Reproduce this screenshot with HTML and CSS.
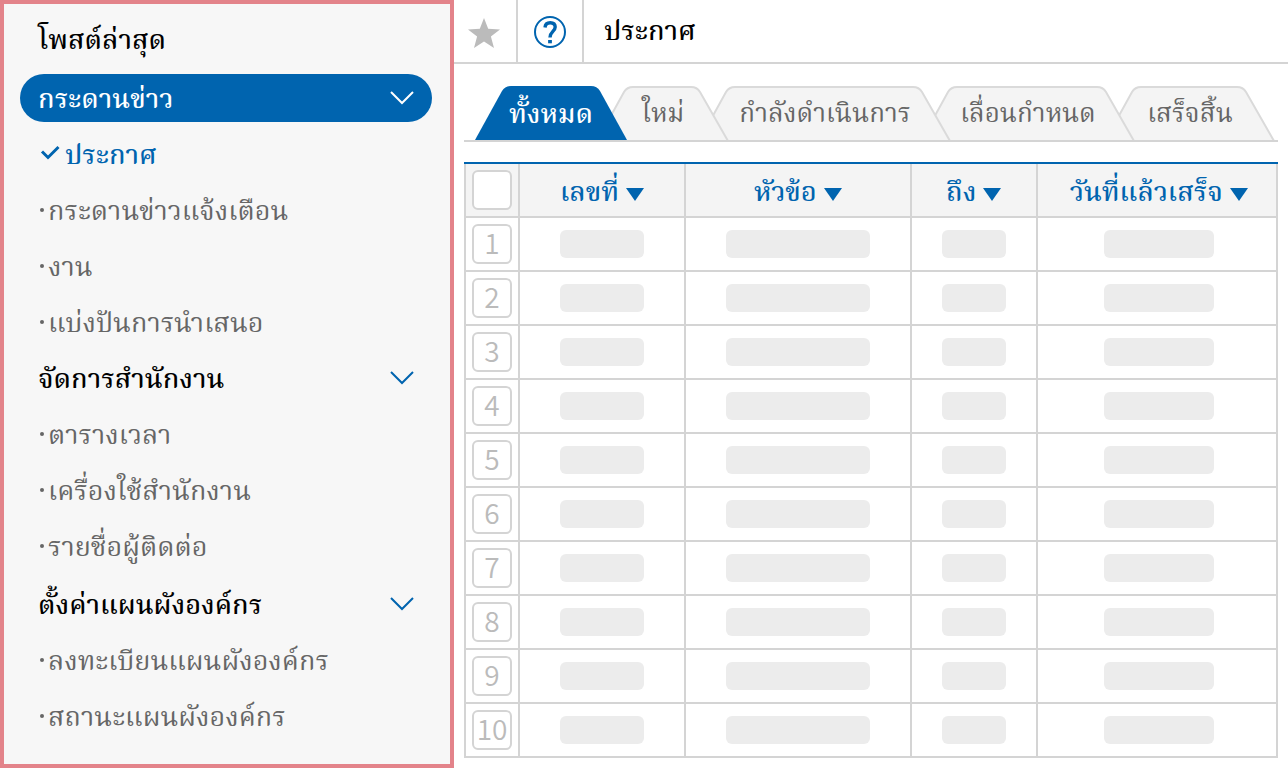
FILE: index.html
```html
<!DOCTYPE html>
<html lang="th">
<head>
<meta charset="utf-8">
<meta name="viewport" content="width=device-width, initial-scale=1">
<title>ประกาศ</title>
<link rel="stylesheet" href="styles.css">
</head>
<body>
<div class="app">
  <nav class="sidebar">
    <h2 class="side-title">โพสต์ล่าสุด</h2>
    <section class="group">
      <button class="group-head is-active" type="button">กระดานข่าว
        <svg class="chevron" width="24" height="14" viewBox="0 0 24 14"><path d="M1 1 12 12 23 1"/></svg>
      </button>
      <a class="item is-current" href="#"><svg class="check" width="20" height="16" viewBox="0 0 20 16"><path d="M2 6.500 8 12.500 18.500 2"/></svg>ประกาศ</a>
      <a class="item" href="#">กระดานข่าวแจ้งเตือน</a>
      <a class="item" href="#">งาน</a>
      <a class="item" href="#">แบ่งปันการนำเสนอ</a>
    </section>
    <section class="group">
      <button class="group-head" type="button">จัดการสำนักงาน
        <svg class="chevron" width="24" height="14" viewBox="0 0 24 14"><path d="M1 1 12 12 23 1"/></svg>
      </button>
      <a class="item" href="#">ตารางเวลา</a>
      <a class="item" href="#">เครื่องใช้สำนักงาน</a>
      <a class="item" href="#">รายชื่อผู้ติดต่อ</a>
    </section>
    <section class="group">
      <button class="group-head" type="button">ตั้งค่าแผนผังองค์กร
        <svg class="chevron" width="24" height="14" viewBox="0 0 24 14"><path d="M1 1 12 12 23 1"/></svg>
      </button>
      <a class="item" href="#">ลงทะเบียนแผนผังองค์กร</a>
      <a class="item" href="#">สถานะแผนผังองค์กร</a>
    </section>
  </nav>

  <main class="main">
    <header class="topbar">
      <button class="tool tool-star" type="button" aria-label="Favorite">
        <svg width="32" height="30" viewBox="0 0 32 30"><path fill="#bbb" d="M16 0 20.200 10.800 32 11.500 22.900 18.600 26 30 16 23.600 6 30 9.100 18.600 0 11.500 11.800 10.800Z"/></svg>
      </button>
      <button class="tool tool-help" type="button" aria-label="Help">
        <svg width="32" height="32" viewBox="0 0 32 32" fill="none" stroke="#0064af"><circle cx="16" cy="16" r="15" stroke-width="2"/><path d="M11 11.500C11.300 8 13.300 6.700 16.200 6.700c3.200 0 5 1.800 5 4.300 0 4.300-5.200 4.600-5.200 10.400" stroke-width="3.400"/><path d="M16 24v3.300" stroke-width="3.800"/></svg>
      </button>
      <h1 class="page-title">ประกาศ</h1>
    </header>

    <div class="content">
      <div class="tabs" role="tablist">
        <button class="tab tab-all is-selected" type="button" role="tab" aria-selected="true"><svg class="tab-shape" viewBox="0 0 152 54"><path d="M0 54 27 5Q30 0 36 0H116Q122 0 125 5L152 54Z"/></svg><span class="tab-text">ทั้งหมด</span></button>
        <button class="tab tab-new" type="button" role="tab"><svg class="tab-shape" viewBox="0 0 132 54"><path d="M0 55 27 6Q30 1 36 1H94Q100 1 103 6L131 55"/></svg><span class="tab-text">ใหม่</span></button>
        <button class="tab tab-progress" type="button" role="tab"><svg class="tab-shape" viewBox="0 0 252 54"><path d="M0 55 27 6Q30 1 36 1H214Q220 1 223 6L251 55"/></svg><span class="tab-text">กำลังดำเนินการ</span></button>
        <button class="tab tab-postponed" type="button" role="tab"><svg class="tab-shape" viewBox="0 0 214 54"><path d="M0 55 27 6Q30 1 36 1H176Q182 1 185 6L213 55"/></svg><span class="tab-text">เลื่อนกำหนด</span></button>
        <button class="tab tab-done" type="button" role="tab"><svg class="tab-shape" viewBox="0 0 170 54"><path d="M0 55 27 6Q30 1 36 1H132Q138 1 141 6L169 55"/></svg><span class="tab-text">เสร็จสิ้น</span></button>
      </div>

      <div class="board-frame">
        <table class="board">
          <colgroup><col class="c-check"><col class="c-no"><col class="c-subject"><col class="c-to"><col class="c-date"></colgroup>
          <thead>
            <tr>
              <th><input class="box" type="checkbox" aria-label="เลือกทั้งหมด"></th>
              <th><button class="sort" type="button">เลขที่<i class="arrow"></i></button></th>
              <th><button class="sort" type="button">หัวข้อ<i class="arrow"></i></button></th>
              <th><button class="sort" type="button">ถึง<i class="arrow"></i></button></th>
              <th><button class="sort" type="button">วันที่แล้วเสร็จ<i class="arrow"></i></button></th>
            </tr>
          </thead>
          <tbody>
            <tr><td><span class="box">1</span></td><td><span class="bar bar-no"></span></td><td><span class="bar bar-subject"></span></td><td><span class="bar bar-to"></span></td><td><span class="bar bar-date"></span></td></tr>
            <tr><td><span class="box">2</span></td><td><span class="bar bar-no"></span></td><td><span class="bar bar-subject"></span></td><td><span class="bar bar-to"></span></td><td><span class="bar bar-date"></span></td></tr>
            <tr><td><span class="box">3</span></td><td><span class="bar bar-no"></span></td><td><span class="bar bar-subject"></span></td><td><span class="bar bar-to"></span></td><td><span class="bar bar-date"></span></td></tr>
            <tr><td><span class="box">4</span></td><td><span class="bar bar-no"></span></td><td><span class="bar bar-subject"></span></td><td><span class="bar bar-to"></span></td><td><span class="bar bar-date"></span></td></tr>
            <tr><td><span class="box">5</span></td><td><span class="bar bar-no"></span></td><td><span class="bar bar-subject"></span></td><td><span class="bar bar-to"></span></td><td><span class="bar bar-date"></span></td></tr>
            <tr><td><span class="box">6</span></td><td><span class="bar bar-no"></span></td><td><span class="bar bar-subject"></span></td><td><span class="bar bar-to"></span></td><td><span class="bar bar-date"></span></td></tr>
            <tr><td><span class="box">7</span></td><td><span class="bar bar-no"></span></td><td><span class="bar bar-subject"></span></td><td><span class="bar bar-to"></span></td><td><span class="bar bar-date"></span></td></tr>
            <tr><td><span class="box">8</span></td><td><span class="bar bar-no"></span></td><td><span class="bar bar-subject"></span></td><td><span class="bar bar-to"></span></td><td><span class="bar bar-date"></span></td></tr>
            <tr><td><span class="box">9</span></td><td><span class="bar bar-no"></span></td><td><span class="bar bar-subject"></span></td><td><span class="bar bar-to"></span></td><td><span class="bar bar-date"></span></td></tr>
            <tr><td><span class="box">10</span></td><td><span class="bar bar-no"></span></td><td><span class="bar bar-subject"></span></td><td><span class="bar bar-to"></span></td><td><span class="bar bar-date"></span></td></tr>
          </tbody>
        </table>
      </div>
    </div>
  </main>
</div>
</body>
</html>
```
FILE: styles.css
```css
:root {
  --blue: #0064af;
  --line: #d4d4d4;
  --grey: #666;
}

* { box-sizing: border-box; }

body {
  margin: 0;
  background: #fff;
  color: #000;
  font: 27px/48px "Noto Serif Thai", "Noto Sans Thai", "Noto Sans", "Noto Sans CJK KR", sans-serif;
}

button {
  margin: 0;
  padding: 0;
  border: 0;
  background: none;
  color: inherit;
  font: inherit;
  cursor: pointer;
}

h1, h2 { margin: 0; font: inherit; }

.app {
  display: grid;
  grid-template-columns: 454px 1fr;
  min-height: 100vh;
}

/* Sidebar */
.sidebar {
  display: flex;
  flex-direction: column;
  gap: 8px;
  padding: 14px 18px 14px 16px;
  border: 4px solid #e3838a;
  background: #f7f7f7;
}

.side-title {
  height: 48px;
  padding-left: 18px;
  font-weight: 500;
}

.group { display: flex; flex-direction: column; gap: 8px; }
.group:last-child { padding-top: 2px; }

.group-head {
  display: flex;
  align-items: center;
  justify-content: space-between;
  height: 48px;
  padding: 6px 18px 0;
  border-radius: 24px;
  font-weight: 500;
}

.group-head.is-active { background: var(--blue); color: #fff; }

.chevron {
  margin-bottom: 6px;
  fill: none;
  stroke: var(--blue);
  stroke-width: 2;
}

.is-active .chevron { stroke: #fff; }

.item {
  display: flex;
  align-items: center;
  height: 48px;
  padding: 6px 0 0 20px;
  color: var(--grey);
  text-decoration: none;
}

.item::before {
  content: "";
  width: 4px;
  height: 4px;
  margin: 0 4px 6px 0;
  border-radius: 2px;
  background: var(--grey);
}

.item.is-current { color: var(--blue); font-weight: 500; }
.item.is-current::before { display: none; }

.check {
  margin: 0 5px 8px 0;
  fill: none;
  stroke: var(--blue);
  stroke-width: 3;
}

/* Top bar */
.topbar {
  display: flex;
  height: 64px;
  border-bottom: 2px solid var(--line);
}

.tool {
  display: flex;
  align-items: center;
  justify-content: center;
  border-right: 2px solid var(--line);
}

.tool-star { width: 64px; padding: 4px 2px 0 0; }
.tool-help { width: 66px; padding-top: 2px; }
.page-title { padding: 9px 20px 0; font-weight: 500; }

/* Tabs */
.content { padding: 22px 10px 10px; }

.tabs {
  display: flex;
  height: 56px;
  margin-bottom: 20px;
  padding-left: 11px;
  border-bottom: 2px solid var(--line);
}

.tab {
  position: relative;
  height: 54px;
  margin-right: -30px;
  padding-top: 4px;
  color: var(--grey);
  font-size: 26px;
}

.tab-shape {
  position: absolute;
  inset: 0;
  width: 100%;
  height: 100%;
  fill: #f4f4f4;
  stroke: #dadada;
  stroke-width: 2;
}

.tab-text { position: relative; }
.tab-all { z-index: 5; width: 152px; }
.tab-new { z-index: 4; width: 132px; }
.tab-progress { z-index: 3; width: 252px; }
.tab-postponed { z-index: 2; width: 214px; }
.tab-done { z-index: 1; width: 170px; }

.tab.is-selected {
  padding-top: 6px;
  color: #fff;
  font-size: 27px;
  font-weight: 500;
}

.is-selected .tab-shape { fill: var(--blue); stroke: none; }

/* Table */
.board-frame { border-top: 2px solid var(--blue); }

.board {
  width: 100%;
  table-layout: fixed;
  border-collapse: collapse;
}

.c-check { width: 54px; }
.c-no { width: 21.9%; }
.c-subject { width: 29.8%; }
.c-to { width: 16.6%; }
.c-date { width: 31.7%; }

.board th, .board td {
  height: 54px;
  padding: 0;
  border: 2px solid var(--line);
  text-align: center;
  vertical-align: middle;
}

.board th {
  height: 53px;
  border-top: 0;
  background: #f4f4f4;
  color: var(--blue);
  font-weight: 500;
}

.board th:last-child, .board td:last-child { padding-left: 4px; }

.sort {
  display: flex;
  align-items: center;
  justify-content: center;
  gap: 7px;
  width: 100%;
  height: 48px;
  padding-top: 8px;
}

.arrow {
  border: 9px solid transparent;
  border-top: 13px solid var(--blue);
  border-bottom: 0;
}

.box {
  appearance: none;
  display: block;
  width: 40px;
  height: 40px;
  margin: 0 auto;
  border: 2px solid var(--line);
  border-radius: 6px;
  background: #fff;
  color: #bbb;
  font: 350 28px/32px "Noto Sans CJK KR", sans-serif;
}

.bar {
  display: block;
  height: 28px;
  margin: 0 auto;
  border-radius: 6px;
  background: #ececec;
}

.bar-no { width: 84px; }
.bar-subject { width: 144px; }
.bar-to { width: 64px; }
.bar-date { width: 110px; }
```
